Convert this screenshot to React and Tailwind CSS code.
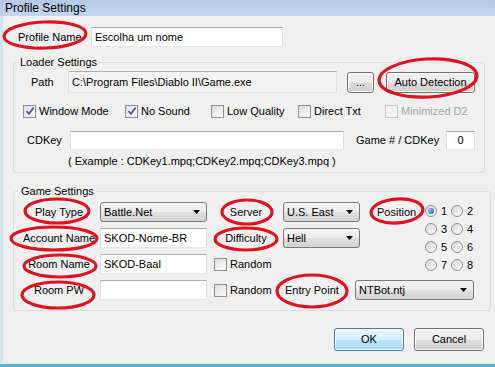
import React from "react";

function Checkbox({ checked, disabled }) {
  return (
    <span
      className={
        "relative inline-flex h-[13px] w-[13px] shrink-0 items-center justify-center border " +
        (disabled
          ? "border-[#c6c6c6] bg-[#f4f4f4]"
          : "border-[#8e8f8f] bg-[linear-gradient(135deg,#dcdcdc,#ffffff)]")
      }
    >
      {checked && (
        <svg width="10" height="10" viewBox="0 0 10 10">
          <path d="M1.5 5.2 L4 7.8 L8.6 1.6" fill="none" stroke="#4a5f96" strokeWidth="1.8" />
        </svg>
      )}
    </span>
  );
}

function Radio({ checked }) {
  return (
    <span className="inline-flex h-[12px] w-[12px] shrink-0 items-center justify-center rounded-full border border-[#8e8f8f] bg-[linear-gradient(135deg,#d6d6d6,#fbfbfb)]">
      {checked && (
        <span className="h-[6px] w-[6px] rounded-full bg-[radial-gradient(circle_at_35%_35%,#8fc0f5,#1d4f9e)]" />
      )}
    </span>
  );
}

function Combo({ value, w }) {
  return (
    <div
      className={
        "flex h-[20px] items-center justify-between rounded-[3px] border border-[#7a7a7a] bg-[linear-gradient(#f4f4f4,#ececec_50%,#e0e0e0_50%,#d3d3d3)] pl-[3px] pr-[6px] " +
        w
      }
    >
      <span>{value}</span>
      <svg width="7" height="4" viewBox="0 0 7 4">
        <path d="M0 0 H7 L3.5 4 Z" fill="#000" />
      </svg>
    </div>
  );
}

function TextBox({ value, w, h = "h-[20px]", gray, center }) {
  return (
    <div
      className={
        "flex items-center border border-[#abadb3] border-l-[#dbdfe6] border-r-[#dbdfe6] border-b-[#e3e9ef] " +
        (gray ? "bg-[#f3f3f3] " : "bg-white ") +
        (center ? "justify-center " : "pl-[3px] ") +
        w +
        " " +
        h
      }
    >
      {value}
    </div>
  );
}

function Button({ children, w, primary }) {
  return (
    <div
      className={
        "flex items-center justify-center rounded-[3px] border shadow-[inset_0_0_0_1px_rgba(255,255,255,0.8)] " +
        (primary
          ? "border-[#3c7fb1] bg-[linear-gradient(#e9f6fd,#d9f0fc_50%,#bee6fd_50%,#a7d9f5)] "
          : "border-[#707070] bg-[linear-gradient(#f2f2f2,#ebebeb_50%,#dddddd_50%,#cfcfcf)] ") +
        w
      }
    >
      {children}
    </div>
  );
}

const ellipses = [
  [45, 35, 41, 13, -2],
  [428, 78, 49, 19, -3],
  [57, 211, 32, 12, 0],
  [54, 238.5, 43, 11.5, 0],
  [60, 266, 36, 11, 0],
  [58, 295, 36, 13, 0],
  [247, 212, 25, 12, 0],
  [246, 239, 31, 11, 0],
  [397, 211, 26, 12, -4],
  [312, 291, 35, 16, 0],
];

export default function App() {
  return (
    <div className="relative flex h-[367px] w-[495px] flex-col overflow-hidden bg-[#f0f0f0] font-['Liberation_Sans',Arial,sans-serif] text-[11px] leading-none text-black">
      <div className="flex h-[16px] shrink-0 items-center bg-[linear-gradient(#b2c9e3,#c3d6eb)] pl-[5px] text-[12px]">
        Profile Settings
      </div>

      <div className="flex flex-1 flex-col border-l-[3px] border-[#d5e4f1]">
        {/* Profile name */}
        <div className="mt-[11px] flex h-[20px] items-center pl-[15px]">
          <span className="w-[73px]">Profile Name</span>
          <TextBox value="Escolha um nome" w="w-[192px]" />
        </div>

        {/* Loader settings */}
        <fieldset className="ml-[10px] mt-[8px] w-[472px] rounded-[3px] border border-[#d5dfe5] pb-[4px]">
          <legend className="ml-[4px] px-[2px] leading-[14px]">Loader Settings</legend>
          <div className="mt-[2px] flex h-[22px] items-center pl-[17px]">
            <span className="w-[37px]">Path</span>
            <TextBox value="C:\Program Files\Diablo II\Game.exe" w="w-[269px]" h="h-[22px]" gray />
            <div className="ml-[10px]">
              <Button w="w-[27px] h-[21px]">...</Button>
            </div>
            <div className="ml-[12px]">
              <Button w="w-[89px] h-[21px]">Auto Detection</Button>
            </div>
          </div>
          <div className="mt-[10px] flex h-[16px] items-center pl-[9px]">
            <div className="flex w-[102px] items-center gap-[3px]">
              <Checkbox checked />
              <span>Window Mode</span>
            </div>
            <div className="flex w-[86px] items-center gap-[3px]">
              <Checkbox checked />
              <span>No Sound</span>
            </div>
            <div className="flex w-[87px] items-center gap-[3px]">
              <Checkbox />
              <span>Low Quality</span>
            </div>
            <div className="flex w-[87px] items-center gap-[3px]">
              <Checkbox />
              <span>Direct Txt</span>
            </div>
            <div className="flex items-center gap-[3px]">
              <Checkbox disabled />
              <span className="text-[#a3a3a3]">Minimized D2</span>
            </div>
          </div>
          <div className="mt-[11px] flex h-[20px] items-center pl-[13px]">
            <span className="w-[43px]">CDKey</span>
            <TextBox value="" w="w-[274px]" h="h-[19px]" />
            <span className="ml-[12px] w-[90px]">Game # / CDKey</span>
            <TextBox value="0" w="w-[29px]" h="h-[19px]" center />
          </div>
          <div className="mt-[4px] flex h-[14px] items-center pl-[54px]">
            ( Example : CDKey1.mpq;CDKey2.mpq;CDKey3.mpq )
          </div>
        </fieldset>

        {/* Game settings */}
        <fieldset className="ml-[10px] mt-[11px] w-[478px] rounded-[3px] border border-[#d5dfe5] pb-[10px]">
          <legend className="ml-[5px] px-[2px] leading-[14px]">Game Settings</legend>
          <div className="mt-[4px] flex">
            <div className="flex w-[411px] flex-col gap-[6px]">
              <div className="flex h-[20px] items-center">
                <span className="ml-[6px] w-[78px] text-center">Play Type</span>
                <div className="ml-[2px]">
                  <Combo value="Battle.Net" w="w-[107px]" />
                </div>
                <span className="ml-[2px] w-[74px] text-center">Server</span>
                <Combo value="U.S. East" w="w-[77px]" />
                <span className="pl-[17px]">Position</span>
              </div>
              <div className="flex h-[20px] items-center">
                <span className="ml-[6px] w-[78px] text-center">Account Name</span>
                <div className="ml-[2px]">
                  <TextBox value="SKOD-Nome-BR" w="w-[107px]" />
                </div>
                <span className="ml-[2px] w-[74px] text-center">Difficulty</span>
                <Combo value="Hell" w="w-[77px]" />
              </div>
              <div className="flex h-[20px] items-center">
                <span className="ml-[6px] w-[78px] text-center">Room Name</span>
                <div className="ml-[2px]">
                  <TextBox value="SKOD-Baal" w="w-[107px]" />
                </div>
                <div className="ml-[7px] flex items-center gap-[3px]">
                  <Checkbox />
                  <span>Random</span>
                </div>
              </div>
            </div>
            <div className="grid grid-cols-[26px_26px] grid-rows-[18px_18px_18px_18px]">
              {[1, 2, 3, 4, 5, 6, 7, 8].map((n) => (
                <div key={n} className="flex items-center gap-[4px]">
                  <Radio checked={n === 1} />
                  <span>{n}</span>
                </div>
              ))}
            </div>
          </div>
          <div className="mt-[6px] flex h-[20px] items-center">
            <span className="ml-[6px] w-[78px] text-center">Room PW</span>
            <div className="ml-[2px]">
              <TextBox value="" w="w-[107px]" />
            </div>
            <div className="ml-[7px] flex w-[71px] items-center gap-[3px]">
              <Checkbox />
              <span>Random</span>
            </div>
            <span className="w-[70px]">Entry Point</span>
            <Combo value="NTBot.ntj" w="w-[119px]" />
          </div>
        </fieldset>

        <div className="mt-[17px] flex justify-end gap-[10px] pr-[11px]">
          <Button w="w-[70px] h-[23px]" primary>
            OK
          </Button>
          <Button w="w-[70px] h-[23px]">Cancel</Button>
        </div>
      </div>

      <div className="h-[1px] shrink-0 bg-[#d3ecf2]" />
      <div className="h-[3px] shrink-0 bg-[#5eb2c2]" />

      <svg className="pointer-events-none absolute left-0 top-0" width="495" height="367">
        {ellipses.map(([cx, cy, rx, ry, rot], i) => (
          <ellipse
            key={i}
            cx={cx}
            cy={cy}
            rx={rx}
            ry={ry}
            transform={`rotate(${rot} ${cx} ${cy})`}
            fill="none"
            stroke="#dc1420"
            strokeWidth="3.2"
          />
        ))}
      </svg>
    </div>
  );
}
